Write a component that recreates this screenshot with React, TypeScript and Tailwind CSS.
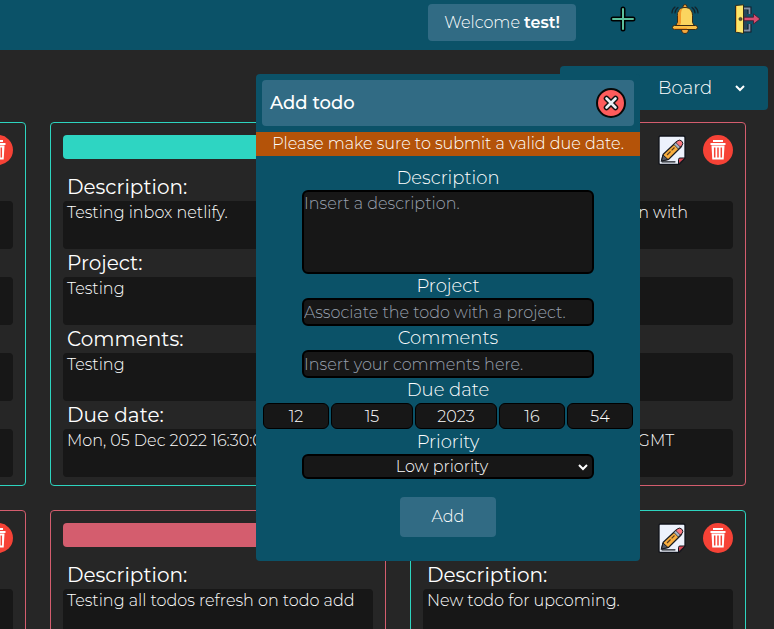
import React from "react";

type Tone = "teal" | "rose";

interface Todo {
  id: number;
  tone: Tone;
  description: string;
  project: string;
  comments: string;
  due: string;
}

const todos: Todo[] = [
  { id: 1, tone: "teal", description: "", project: "", comments: "", due: "" },
  {
    id: 2,
    tone: "teal",
    description: "Testing inbox netlify.",
    project: "Testing",
    comments: "Testing",
    due: "Mon, 05 Dec 2022 16:30:00 GMT",
  },
  {
    id: 3,
    tone: "rose",
    description: "Testing the todo application with",
    project: "",
    comments: "",
    due: "Mon, 05 Dec 2022 16:30:00 GMT",
  },
  { id: 4, tone: "rose", description: "", project: "", comments: "", due: "" },
  { id: 5, tone: "rose", description: "Testing all todos refresh on todo add", project: "", comments: "", due: "" },
  { id: 6, tone: "teal", description: "New todo for upcoming.", project: "", comments: "", due: "" },
];

const borderTone: Record<Tone, string> = {
  teal: "border-[#2dd4bf]",
  rose: "border-[#d45d6e]",
};

const barTone: Record<Tone, string> = {
  teal: "bg-[#2ed5c2]",
  rose: "bg-[#d45d6e]",
};

function PlusIcon() {
  return (
    <svg viewBox="0 0 30 30" className="size-[30px]" aria-hidden="true">
      <path d="M15 5v20M5 15h20" stroke="#000" strokeWidth="5" strokeLinecap="round" />
      <path d="M15 5v20M5 15h20" stroke="#5cc09b" strokeWidth="2" strokeLinecap="round" />
    </svg>
  );
}

function BellIcon() {
  return (
    <svg viewBox="0 0 30 30" className="size-[30px]" aria-hidden="true">
      <path d="M5 3c-2 1.500-3 3.500-3 6M8 3.500c-2 1.500-3 3-3 5.500M25 3c2 1.500 3 3.500 3 6M22 3.500c2 1.500 3 3 3 5.500" fill="none" stroke="#13232b" strokeWidth="1.200" strokeLinecap="round" />
      <circle cx="15" cy="2.500" r="1.900" fill="#f6a83c" stroke="#3b2a14" />
      <path d="M11.500 25.500h7c0 2.500-1.500 4-3.500 4s-3.500-1.500-3.500-4z" fill="#f6a83c" stroke="#3b2a14" />
      <path d="M15 3.500c-5 0-7.500 3.500-7.500 8v7l-2 3.500h19l-2-3.500v-7c0-4.500-2.500-8-7.500-8z" fill="#fbd55f" stroke="#3b2a14" />
      <path d="M12.500 4.500c-3 1-4.500 3.800-4.500 7V19l-1.500 2.500H10l1-3v-8c0-2.500.5-4.500 1.500-6z" fill="#f39b2b" />
      <rect x="2.500" y="21.500" width="25" height="4" rx="2" fill="#fbc046" stroke="#3b2a14" />
      <path d="M4 24.500h13" stroke="#f39b2b" strokeWidth="1.200" />
    </svg>
  );
}

function LeaveIcon() {
  return (
    <svg viewBox="0 0 30 30" className="size-[30px]" aria-hidden="true">
      <path d="M12 4.500h5.500V10M17.500 20v6.500H12" fill="none" stroke="#151c2b" strokeWidth="4" />
      <path d="M12 4.500h5.500V10M17.500 20v6.500H12" fill="none" stroke="#8191a8" strokeWidth="1.800" />
      <path d="M11 6h4v19h-4z" fill="#24455b" />
      <path d="M3.500 1.500 11.500.8v28.700l-8-1.500z" fill="#fbe76c" stroke="#2b2b20" />
      <path d="M4 2h1v26H4z" fill="#f2b740" />
      <circle cx="8.500" cy="15" r="1.600" fill="#5b5131" stroke="#222" strokeWidth=".6" />
      <path d="M12 13.200h9.500V9.800L28 15l-6.500 5v-3.300H12z" fill="#d84d70" stroke="#472033" strokeWidth=".9" />
    </svg>
  );
}

function CloseIcon() {
  return (
    <svg viewBox="0 0 30 30" className="size-[30px]" aria-hidden="true">
      <circle cx="15" cy="15" r="14" fill="#ff5c5c" stroke="#080808" strokeWidth="2" />
      <path d="m10.500 10.500 9 9M19.500 10.500l-9 9" stroke="#111" strokeWidth="5.500" strokeLinecap="round" />
      <path d="m10.500 10.500 9 9M19.500 10.500l-9 9" stroke="#e9f1f5" strokeWidth="2.600" strokeLinecap="round" />
    </svg>
  );
}

function EditIcon() {
  return (
    <svg viewBox="0 0 30 30" className="size-[30px]" aria-hidden="true">
      <path d="M3.500 1h23Q28 1 28 2.500V23l-6 6.500H3.500Q2 29.500 2 28V2.500Q2 1 3.500 1z" fill="#edf2fc" stroke="#10131a" strokeWidth="1.300" />
      <path d="M21.500 29v-4.500q0-1.500 1.500-1.500H28z" fill="#dc4654" stroke="#10131a" />
      <path d="M5 26.800h13" stroke="#15191f" strokeWidth="1.200" strokeLinecap="round" />
      <path d="m4.500 26 1.700-6.700L18.800 7.500q1.500-1.500 3.200-.8l2.500 2.500q.8 1.500-.7 3L11.500 24.500z" fill="#f9ae3e" stroke="#191b20" strokeWidth="1.300" />
      <path d="m17.800 8.500 3-2.800q2-1.500 4 .5t.4 4L22.300 13z" fill="#fa777f" stroke="#191b20" />
      <path d="m16.800 9.400 2-1.900 4.500 4.500-2 2z" fill="#a7b4c4" stroke="#191b20" strokeWidth=".7" />
      <path d="m4.500 26 1.500-6 5 4.500z" fill="#555a66" stroke="#191b20" />
      <path d="m10 20 7.500-7.500" stroke="#593c20" strokeWidth="1.200" strokeDasharray="5 1.500" />
    </svg>
  );
}

function TrashIcon() {
  return (
    <svg viewBox="0 0 30 30" className="size-[30px]" aria-hidden="true">
      <circle cx="15" cy="15" r="15" fill="#f64236" />
      <path d="M10 6h10M7.500 9h15" stroke="#fff" strokeWidth="1.800" />
      <path d="M8.500 10.500h13l-.8 14H9.300z" fill="#fff" />
      <path d="M11.700 12.500v10M15 12.500v10M18.300 12.500v10" stroke="#f64236" strokeWidth="1.500" />
    </svg>
  );
}

function Chevron() {
  return (
    <svg viewBox="0 0 12 8" className="h-2 w-3" aria-hidden="true">
      <path d="m2 2 4 4 4-4" fill="none" stroke="#fff" strokeWidth="2" />
    </svg>
  );
}

function Field({ label, value }: { label: string; value: string }) {
  return (
    <div>
      <h3 className="px-1 text-xl leading-7 font-normal">{label}</h3>
      <p className="h-12 rounded bg-neutral-900 px-1 leading-6">{value}</p>
    </div>
  );
}

function TodoCard({ todo }: { todo: Todo }) {
  return (
    <article className={`rounded border px-3 pt-3 pb-2 ${borderTone[todo.tone]}`}>
      <div className="mb-2 flex items-start gap-4">
        <div className={`mr-2 h-6 flex-1 rounded ${barTone[todo.tone]}`} />
        <button type="button" aria-label="Edit todo">
          <EditIcon />
        </button>
        <button type="button" aria-label="Delete todo">
          <TrashIcon />
        </button>
      </div>
      <Field label="Description:" value={todo.description} />
      <Field label="Project:" value={todo.project} />
      <Field label="Comments:" value={todo.comments} />
      <Field label="Due date:" value={todo.due} />
    </article>
  );
}

const labelClass = "text-lg leading-6";
const boxClass = "block w-full rounded-md border-2 border-black bg-neutral-900 placeholder:text-gray-400";
const dateClass = "h-[26px] min-w-0 rounded-md border border-black bg-neutral-900 text-center";

function AddTodoDialog() {
  return (
    <form
      role="dialog"
      aria-labelledby="dialog-title"
      className="absolute top-[74px] left-64 w-96 rounded bg-[#0b5268] pb-6 text-center"
    >
      <div className="m-1.5 flex h-[46px] items-center justify-between rounded bg-[#316b84] px-2">
        <h2 id="dialog-title" className="text-lg leading-6 font-medium">
          Add todo
        </h2>
        <button type="button" aria-label="Close">
          <CloseIcon />
        </button>
      </div>
      <p role="alert" className="bg-[#b45309] leading-6">
        Please make sure to submit a valid due date.
      </p>
      <div className="mx-auto mt-2.5 flex w-[292px] flex-col">
        <label htmlFor="description" className={labelClass}>
          Description
        </label>
        <textarea id="description" placeholder="Insert a description." className={`${boxClass} h-[84px] resize-none leading-6`} />
        <label htmlFor="project" className={labelClass}>
          Project
        </label>
        <input id="project" placeholder="Associate the todo with a project." className={`${boxClass} h-7`} />
        <label htmlFor="comments" className={labelClass}>
          Comments
        </label>
        <input id="comments" placeholder="Insert your comments here." className={`${boxClass} h-7`} />
      </div>
      <fieldset>
        <legend className={`mx-auto ${labelClass}`}>Due date</legend>
        <div className="flex justify-center gap-0.5 py-px">
          <input aria-label="Month" defaultValue="12" className={`${dateClass} w-[66px]`} />
          <input aria-label="Day" defaultValue="15" className={`${dateClass} w-[82px]`} />
          <input aria-label="Year" defaultValue="2023" className={`${dateClass} w-[82px]`} />
          <input aria-label="Hour" defaultValue="16" className={`${dateClass} w-[66px]`} />
          <input aria-label="Minute" defaultValue="54" className={`${dateClass} w-[66px]`} />
        </div>
      </fieldset>
      <div className="mx-auto flex w-[292px] flex-col">
        <label htmlFor="priority" className={labelClass}>
          Priority
        </label>
        <div className="relative">
          <select id="priority" className={`${boxClass} h-[25px] appearance-none pr-3 text-center leading-5`}>
            <option>Low priority</option>
            <option>Medium priority</option>
            <option>High priority</option>
          </select>
          <span className="pointer-events-none absolute inset-y-0 right-[5px] flex items-center">
            <Chevron />
          </span>
        </div>
      </div>
      <button type="submit" className="mt-[18px] h-10 w-24 rounded bg-[#316b84]">
        Add
      </button>
    </form>
  );
}

export default function App() {
  return (
    <div className="relative h-screen overflow-hidden bg-neutral-800 font-[Montserrat,Inter,sans-serif] text-base font-light text-white">
      <header className="flex h-[50px] items-start justify-end gap-8 bg-[#0b5268] pt-1 pr-3">
        <p className="rounded bg-[#316b84] px-4 py-1.5 leading-[25px]">
          Welcome <strong className="font-semibold">test!</strong>
        </p>
        <button type="button" aria-label="Add todo">
          <PlusIcon />
        </button>
        <button type="button" aria-label="Notifications">
          <BellIcon />
        </button>
        <button type="button" aria-label="Log out">
          <LeaveIcon />
        </button>
      </header>
      <main>
        <div className="flex justify-end pt-4 pr-1.5">
          <div className="relative w-52">
            <select aria-label="View" className="h-11 w-full appearance-none rounded bg-[#0b5268] pl-[98px] text-lg">
              <option>Board</option>
              <option>List</option>
            </select>
            <span className="pointer-events-none absolute inset-y-0 right-[22px] flex items-center">
              <Chevron />
            </span>
          </div>
        </div>
        <div className="flex justify-end pt-3 pr-7">
          <div className="grid shrink-0 grid-cols-[repeat(3,336px)] gap-6">
            {todos.map((todo) => (
              <TodoCard key={todo.id} todo={todo} />
            ))}
          </div>
        </div>
      </main>
      <AddTodoDialog />
    </div>
  );
}
